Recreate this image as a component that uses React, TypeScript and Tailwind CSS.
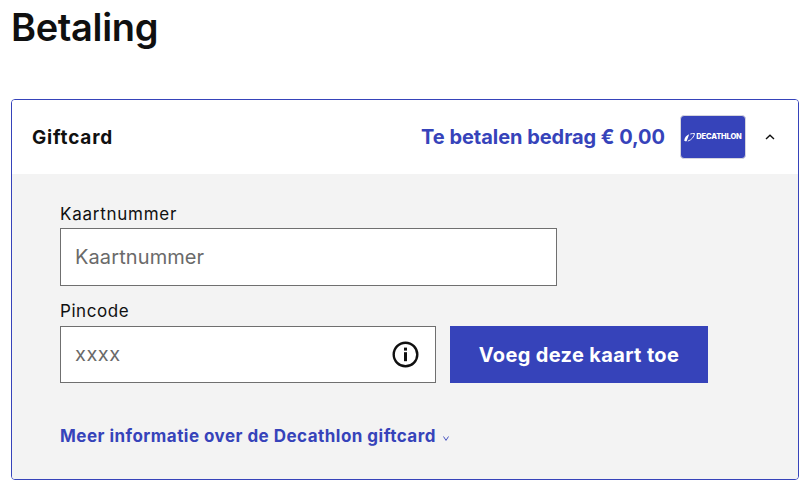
export default function App() {
  return (
    <div className="w-[812px] h-[483px] overflow-hidden bg-white pl-[11px] pr-[13px] font-['Inter',sans-serif] text-[#101010]">
      <h1 className="h-[99px] pt-[4px] text-[38px] leading-[46px] font-semibold tracking-[-0.35px]">Betaling</h1>
      <div className="h-[381px] rounded-[4px] border border-[#3643ba] overflow-hidden flex flex-col">
        <div className="h-[74px] shrink-0 flex items-center bg-white pl-5 pr-[23px]">
          <span className="text-[19px] pt-[2px] font-bold tracking-[0.8px]">Giftcard</span>
          <span className="ml-auto text-[20px] font-bold tracking-[-0.04px] text-[#3643ba]">Te betalen bedrag € 0,00</span>
          <div className="ml-[15px] w-[66px] h-[44px] rounded-[4px] border border-[#d5d5de] bg-[#3643ba] flex items-center justify-center gap-[1px] text-white">
            <svg width="11" height="9" viewBox="0 0 11 9" fill="none">
              <path d="M0.3 7.2C0.6 4.5 2.6 2.4 5.2 1.3L2.6 8.3C1.2 8.5 0.2 8.1 0.3 7.2Z" fill="white" />
              <path d="M6.3 1C7.8 0.5 9.3 0.4 10.6 0.5C10 3.8 7.6 7 3.8 8.1" stroke="white" strokeWidth="0.9" />
            </svg>
            <span className="text-[7.5px] leading-none font-extrabold tracking-[-0.15px]">DECATHLON</span>
          </div>
          <svg className="ml-[19px]" width="10" height="6" viewBox="0 0 10 6" fill="none">
            <path d="M1 5L5 1.2L9 5" stroke="#101010" strokeWidth="1.4" />
          </svg>
        </div>
        <div className="flex-1 bg-[#f3f3f3] pl-[48px] pt-[28px]">
          <label className="block text-[17px] leading-[24px] h-[26px] tracking-[0.75px]">Kaartnummer</label>
          <div className="w-[497px] h-[58px] border border-[#6f6f6f] bg-white flex items-center pl-[14px] text-[20px] tracking-[0.1px] text-[#6a6a6a]">Kaartnummer</div>
          <label className="block mt-[13px] text-[17px] leading-[24px] h-[27px] tracking-[0.55px]">Pincode</label>
          <div className="flex gap-[14px]">
            <div className="w-[376px] h-[57px] border border-[#6f6f6f] bg-white flex items-center pl-[14px] pr-[16px] text-[20px] tracking-[0.5px] text-[#6a6a6a]">
              <span className="-mt-[1px]">xxxx</span>
              <svg className="ml-auto" width="27" height="27" viewBox="0 0 27 27" fill="none">
                <circle cx="13.5" cy="13.5" r="11.8" stroke="#101010" strokeWidth="2.4" />
                <rect x="12" y="6.6" width="3" height="3" fill="#101010" />
                <rect x="12" y="11.2" width="3" height="9" fill="#101010" />
              </svg>
            </div>
            <button className="w-[258px] h-[57px] bg-[#3643ba] text-white text-[20px] font-bold tracking-[0.35px]">Voeg deze kaart toe</button>
          </div>
          <div className="mt-[42px] flex items-center text-[#3643ba]">
            <span className="text-[17px] leading-[22px] font-bold tracking-[0.47px]">Meer informatie over de Decathlon giftcard</span>
            <svg className="ml-[7px] mt-[4px]" width="6" height="5" viewBox="0 0 6 5" fill="none">
              <path d="M0.5 0.5L3 4.4L5.5 0.5" stroke="#3643ba" strokeWidth="0.9" />
            </svg>
          </div>
        </div>
      </div>
    </div>
  );
}
